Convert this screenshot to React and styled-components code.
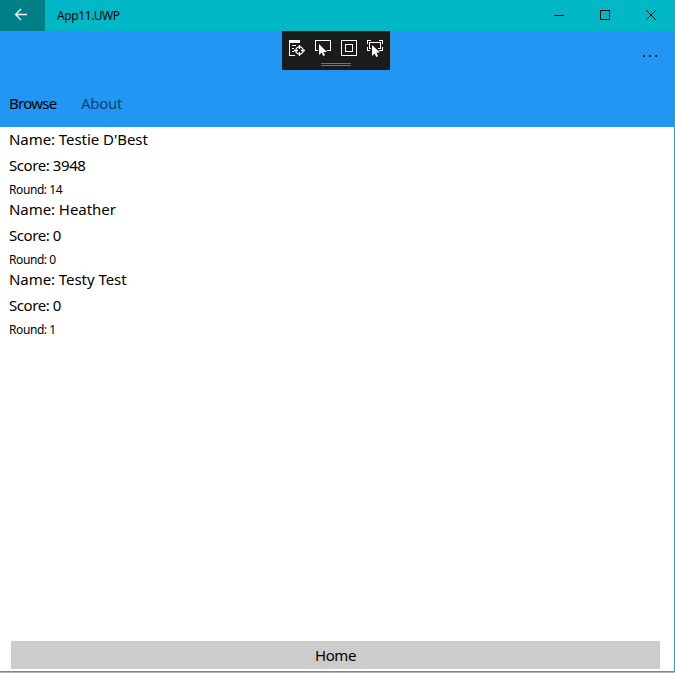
import React from 'react';
import styled, { createGlobalStyle } from 'styled-components';

const GlobalStyle = createGlobalStyle`
  *, *::before, *::after { box-sizing: border-box; }
  body { margin: 0; background: #fff; font-family: "Segoe UI", "Noto Sans", "Open Sans", sans-serif; }
  button { font-family: inherit; border: 0; padding: 0; margin: 0; background: none; }
  svg { display: block; }
`;

const Window = styled.div`
  width: 675px;
  height: 673px;
  display: flex;
  flex-direction: column;
  overflow: hidden;
  background: #fff;
  color: #000;
  border-bottom: 1px solid #b4b4b4;
`;

const TitleBar = styled.header`
  flex: none;
  height: 31px;
  display: flex;
  background: #02b7c6;
`;

const BackButton = styled.button`
  width: 45px;
  height: 31px;
  background: #017f87;
`;

const AppTitle = styled.span`
  flex: 1;
  padding-left: 12px;
  font-size: 12px;
  line-height: 31px;
  letter-spacing: -0.4px;
`;

const CaptionButton = styled.button`
  width: 46px;
  height: 31px;
`;

const Frame = styled.div`
  flex: 1;
  min-height: 0;
  display: flex;
  flex-direction: column;
  border-right: 1px solid #0fb5c6;
  border-bottom: 1px solid #0fb5c6;
`;

const NavBar = styled.nav`
  position: relative;
  flex: none;
  height: 96px;
  display: flex;
  align-items: flex-end;
  gap: 24px;
  padding: 0 0 12px 9px;
  background: #2196f3;
`;

const Tab = styled.button`
  width: ${(p) => p.$width}px;
  font-size: 15px;
  line-height: 24px;
  text-align: left;
  white-space: nowrap;
  letter-spacing: ${(p) => p.$spacing}px;
  color: ${(p) => (p.$active ? '#000' : 'rgba(0, 0, 0, 0.6)')};
`;

const MoreButton = styled.button`
  position: absolute;
  top: 0;
  right: 0;
  width: 48px;
  height: 48px;
`;

const DebugToolbar = styled.div`
  position: absolute;
  top: 0;
  left: 282px;
  width: 108px;
  height: 39px;
  background: #1b1b1c;
`;

const List = styled.ul`
  flex: 1;
  margin: 0;
  padding: 0 9px;
  list-style: none;
`;

const Entry = styled.li`
  height: 70px;
  display: flex;
  flex-direction: column;
  white-space: nowrap;
`;

const Line = styled.span`
  height: 26px;
  font-size: 15px;
  line-height: 25px;
  letter-spacing: ${(p) => p.$spacing}px;
`;

const Round = styled.span`
  height: 18px;
  font-size: 12px;
  line-height: 21px;
  letter-spacing: -0.42px;
`;

const HomeButton = styled.button`
  flex: none;
  height: 28px;
  margin: 0 14px 2px 11px;
  background: #ccc;
  font-size: 15px;
  line-height: 28px;
  letter-spacing: -0.45px;
`;

const entries = [
  { name: "Testie D'Best", score: 3948, round: 14 },
  { name: 'Heather', score: 0, round: 0 },
  { name: 'Testy Test', score: 0, round: 1 },
];

function BackIcon() {
  return (
    <svg width="45" height="31" fill="none" stroke="#fff" strokeWidth="1.3">
      <path d="M27 14.5H16M21 9L15.5 14.5L21 20" />
    </svg>
  );
}

function DebugIcons() {
  return (
    <svg width="108" height="39" fill="none" stroke="#fff" shapeRendering="crispEdges">
      <path d="M7 9h11v3H7z" fill="#fff" stroke="none" />
      <path d="M7.5 11v13M7 24.5h6M10 14.5h4M10 17.5h2M10 20.5h2" />
      <g shapeRendering="auto">
        <circle cx="17.5" cy="19.5" r="3.7" strokeWidth="1.3" />
        <path d="M17.5 14v4M17.5 21v4M12 19.5h4M19 19.5h4" strokeWidth="1.3" />
      </g>
      <path d="M36 19.5H33.5V9.5H48.5V19.5H45" />
      <path d="M37 13V24L39.6 21.6L41.2 25L43 24.2L41.5 21H45Z" fill="#fff" stroke="none" shapeRendering="auto" />
      <path d="M59.5 9.5h15v15h-15zM63.5 13.5h7v7h-7z" />
      <path d="M85.5 13V9.5H89M97 9.5H100.5V13M85.5 16V19.5H88M97 19.5H100.5V16M89 17.5H87.5V11.5H98.5V17.5H96" />
      <path d="M90 14V25L92.6 22.6L94.2 26L96 25.2L94.5 21.5H98Z" fill="#fff" stroke="none" shapeRendering="auto" />
      <path d="M39 32.5h30M39 34.5h30" stroke="#747474" />
    </svg>
  );
}

function CaptionIcon({ d, smooth }) {
  return (
    <svg width="46" height="31" fill="none" stroke="#000" shapeRendering={smooth ? 'auto' : 'crispEdges'}>
      <path d={d} />
    </svg>
  );
}

export default function App() {
  return (
    <>
      <GlobalStyle />
      <Window>
        <TitleBar>
          <BackButton aria-label="Back"><BackIcon /></BackButton>
          <AppTitle>App11.UWP</AppTitle>
          <CaptionButton aria-label="Minimize"><CaptionIcon d="M17 15.5h10" /></CaptionButton>
          <CaptionButton aria-label="Maximize"><CaptionIcon d="M17.5 10.5h9v9h-9z" /></CaptionButton>
          <CaptionButton aria-label="Close"><CaptionIcon smooth d="M17 10l10 10M27 10l-10 10" /></CaptionButton>
        </TitleBar>
        <Frame>
          <NavBar>
            <Tab $active $width={48} $spacing={-0.75}>Browse</Tab>
            <Tab $width={48} $spacing={-0.3}>About</Tab>
            <DebugToolbar><DebugIcons /></DebugToolbar>
            <MoreButton aria-label="More">
              <svg width="48" height="48" fill="#0a1c2e">
                <path d="M17 24h2v2h-2zM23 24h2v2h-2zM29 24h2v2h-2z" />
              </svg>
            </MoreButton>
          </NavBar>
          <List>
            {entries.map((e) => (
              <Entry key={e.name}>
                <Line $spacing={-0.06}>{`Name: ${e.name}`}</Line>
                <Line $spacing={-0.42}>{`Score: ${e.score}`}</Line>
                <Round>{`Round: ${e.round}`}</Round>
              </Entry>
            ))}
          </List>
          <HomeButton>Home</HomeButton>
        </Frame>
      </Window>
    </>
  );
}
